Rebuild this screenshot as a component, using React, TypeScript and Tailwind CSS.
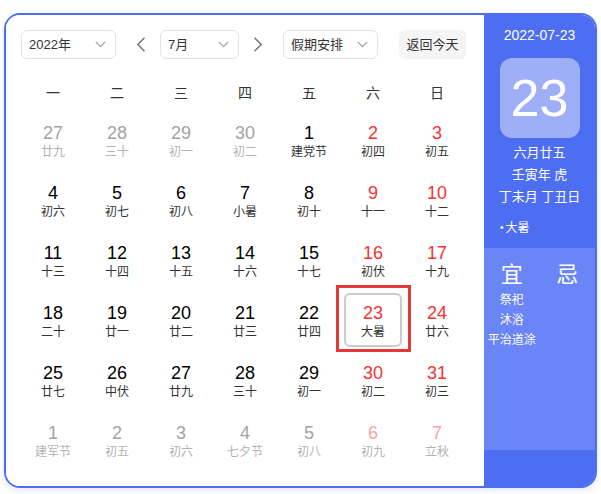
import React from "react";

type Cell = { d: string; l: string; t: "n" | "r" | "g" | "gr"; sel?: boolean };

const rows: Cell[][] = [
  [
    { d: "27", l: "廿九", t: "g" },
    { d: "28", l: "三十", t: "g" },
    { d: "29", l: "初一", t: "g" },
    { d: "30", l: "初二", t: "g" },
    { d: "1", l: "建党节", t: "n" },
    { d: "2", l: "初四", t: "r" },
    { d: "3", l: "初五", t: "r" },
  ],
  [
    { d: "4", l: "初六", t: "n" },
    { d: "5", l: "初七", t: "n" },
    { d: "6", l: "初八", t: "n" },
    { d: "7", l: "小暑", t: "n" },
    { d: "8", l: "初十", t: "n" },
    { d: "9", l: "十一", t: "r" },
    { d: "10", l: "十二", t: "r" },
  ],
  [
    { d: "11", l: "十三", t: "n" },
    { d: "12", l: "十四", t: "n" },
    { d: "13", l: "十五", t: "n" },
    { d: "14", l: "十六", t: "n" },
    { d: "15", l: "十七", t: "n" },
    { d: "16", l: "初伏", t: "r" },
    { d: "17", l: "十九", t: "r" },
  ],
  [
    { d: "18", l: "二十", t: "n" },
    { d: "19", l: "廿一", t: "n" },
    { d: "20", l: "廿二", t: "n" },
    { d: "21", l: "廿三", t: "n" },
    { d: "22", l: "廿四", t: "n" },
    { d: "23", l: "大暑", t: "r", sel: true },
    { d: "24", l: "廿六", t: "r" },
  ],
  [
    { d: "25", l: "廿七", t: "n" },
    { d: "26", l: "中伏", t: "n" },
    { d: "27", l: "廿九", t: "n" },
    { d: "28", l: "三十", t: "n" },
    { d: "29", l: "初一", t: "n" },
    { d: "30", l: "初二", t: "r" },
    { d: "31", l: "初三", t: "r" },
  ],
  [
    { d: "1", l: "建军节", t: "g" },
    { d: "2", l: "初五", t: "g" },
    { d: "3", l: "初六", t: "g" },
    { d: "4", l: "七夕节", t: "g" },
    { d: "5", l: "初八", t: "g" },
    { d: "6", l: "初九", t: "gr" },
    { d: "7", l: "立秋", t: "gr" },
  ],
];

const numCls: Record<Cell["t"], string> = {
  n: "text-black",
  r: "text-[#f73131]",
  g: "text-[#a3a3a3]",
  gr: "text-[#f5a3a3]",
};
const lunCls: Record<Cell["t"], string> = {
  n: "text-[#333333]",
  r: "text-[#333333]",
  g: "text-[#b3b3b3]",
  gr: "text-[#b3b3b3]",
};

function ChevronDown() {
  return (
    <svg width="11" height="7" viewBox="0 0 11 7" fill="none">
      <polyline points="0.8,0.8 5.5,5.6 10.2,0.8" stroke="#a0a0a0" strokeWidth="1.2" />
    </svg>
  );
}

function Select({ label, w }: { label: string; w: string }) {
  return (
    <div
      className={`${w} h-[29px] flex items-center justify-between pl-[7px] pr-[9px] border border-[#e2e2e2] rounded-[6px] text-[13px] text-[#333333]`}
    >
      <span>{label}</span>
      <ChevronDown />
    </div>
  );
}

function Arrow({ dir }: { dir: "l" | "r" }) {
  return (
    <svg width="10" height="15" viewBox="0 0 10 15" fill="none">
      {dir === "l" ? (
        <polyline points="8.5,0.8 1.8,7.5 8.5,14.2" stroke="#707070" strokeWidth="1.4" />
      ) : (
        <polyline points="1.5,0.8 8.2,7.5 1.5,14.2" stroke="#707070" strokeWidth="1.4" />
      )}
    </svg>
  );
}

export default function App() {
  return (
    <div className="min-h-screen bg-white pt-[13px] pl-[4px] font-[family-name:Liberation_Sans,Noto_Sans_CJK_SC,sans-serif]">
      <div className="flex w-[593px] h-[475px] rounded-[16px] border-2 border-[#4e6ef2] overflow-hidden shadow-[0_3px_6px_rgba(78,110,242,0.15)]">
        {/* Left calendar */}
        <div className="w-[478px] bg-white pl-[15px] pt-[15px]">
          <div className="flex items-center h-[29px]">
            <Select label="2022年" w="w-[95px]" />
            <div className="ml-[20px] w-[10px] flex justify-center">
              <Arrow dir="l" />
            </div>
            <div className="ml-[14px]">
              <Select label="7月" w="w-[79px]" />
            </div>
            <div className="ml-[14px] w-[10px] flex justify-center">
              <Arrow dir="r" />
            </div>
            <div className="ml-[20px]">
              <Select label="假期安排" w="w-[95px]" />
            </div>
            <div className="ml-[21px] w-[67px] h-[29px] rounded-[6px] bg-[#f5f5f6] flex items-center justify-center text-[13px] text-[#333333]">
              返回今天
            </div>
          </div>

          <div className="grid grid-cols-7 w-[448px] mt-[20px] h-[28px] items-center text-[14px] text-[#333333]">
            {["一", "二", "三", "四", "五", "六", "日"].map((w) => (
              <div key={w} className="text-center">
                {w}
              </div>
            ))}
          </div>

          <div className="grid grid-cols-7 w-[448px] mt-[5px]">
            {rows.flat().map((c, i) => (
              <div key={i} className="relative h-[60px] flex flex-col items-center pt-[10px]">
                {c.sel && (
                  <>
                    <div className="absolute left-[3px] right-[3px] top-[1px] bottom-[5px] border-2 border-[#cccccc] rounded-[6px]" />
                    <div className="absolute left-[-5px] right-[-6px] top-[-7px] bottom-0 border-[3px] border-[#e53935]" />
                  </>
                )}
                <div className={`relative text-[18px] leading-[22px] ${numCls[c.t]}`}>{c.d}</div>
                <div className={`relative text-[12px] leading-[16px] ${lunCls[c.t]}`}>{c.l}</div>
              </div>
            ))}
          </div>
        </div>

        {/* Right panel */}
        <div className="flex-1 bg-[#4e6ef2] flex flex-col text-white">
          <div className="h-[233px] flex flex-col">
            <div className="pt-[10px] text-center text-[14px] leading-[20px]">2022-07-23</div>
            <div className="mt-[13px] mx-auto w-[80px] h-[80px] rounded-[12px] bg-[#9eaff8] flex items-center justify-center text-[52px] leading-none">
              23
            </div>
            <div className="mt-[4px] text-center text-[13px] leading-[22px]">
              <div>六月廿五</div>
              <div>壬寅年 虎</div>
              <div>丁未月 丁丑日</div>
            </div>
            <div className="mt-[10px] pl-[16px] text-[12px] leading-[20px] flex items-center">
              <span className="mr-[2px] text-[10px]">•</span>
              <span>大暑</span>
            </div>
          </div>
          <div className="h-[202px] bg-[#6a85f5] grid grid-cols-2 pt-[13px]">
            <div className="flex flex-col items-center">
              <div className="text-[22px] leading-[28px]">宜</div>
              <div className="mt-[1px] text-[12px] leading-[20px] text-center">
                <div>祭祀</div>
                <div>沐浴</div>
                <div>平治道涂</div>
              </div>
            </div>
            <div className="flex flex-col items-center">
              <div className="text-[22px] leading-[28px]">忌</div>
            </div>
          </div>
          <div className="flex-1 bg-[#4e6ef2]" />
        </div>
      </div>
    </div>
  );
}
